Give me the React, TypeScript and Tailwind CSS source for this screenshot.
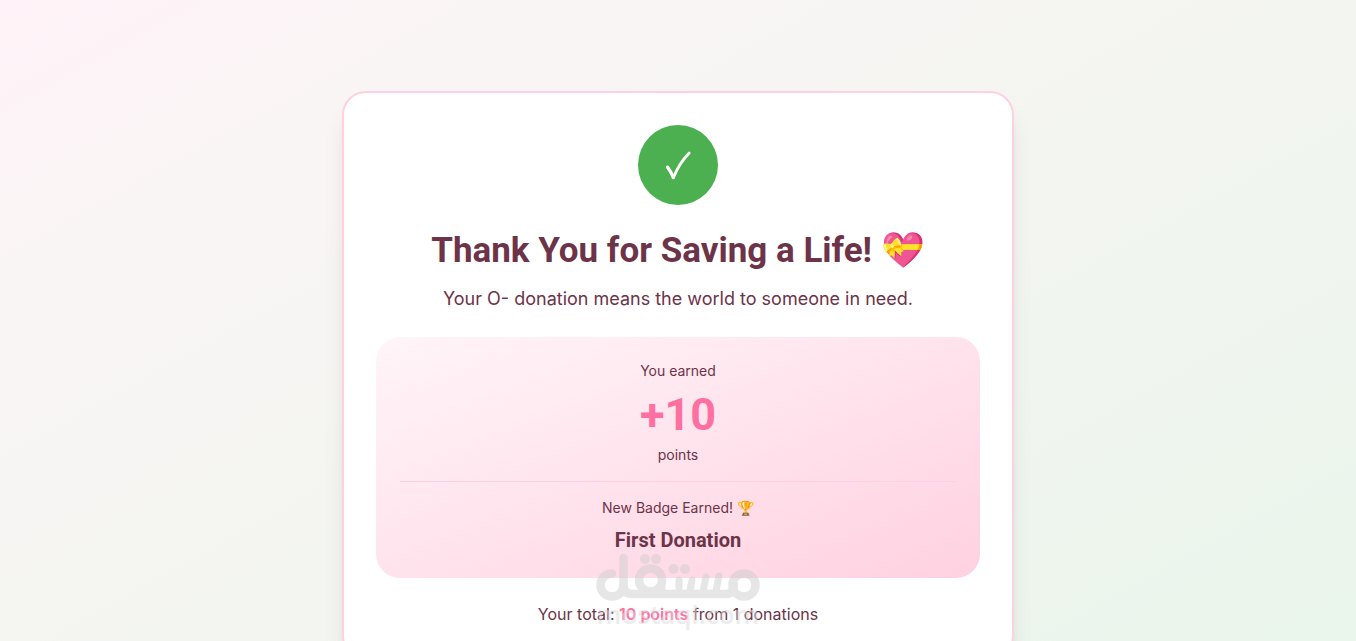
import React from "react";

function CheckBadge() {
  return (
    <div className="mx-auto mb-[26px] flex size-20 items-center justify-center rounded-full bg-[#4caf50]">
      <svg
        viewBox="0 0 80 80"
        className="size-20"
        fill="none"
        stroke="white"
        strokeLinecap="round"
        strokeLinejoin="round"
        role="img"
        aria-label="Success"
      >
        <path d="M29.6 42.2 Q33 46.500 35.200 52.500" strokeWidth="3.4" />
        <path d="M35.500 52.500 Q41 38.500 51.200 28" strokeWidth="2.800" />
      </svg>
    </div>
  );
}

function Watermark() {
  return (
    <div className="pointer-events-none absolute inset-x-0 -top-[50px] flex flex-col items-center opacity-50">
      <svg viewBox="0 0 166 50" className="h-[50px] w-[166px]" role="img" aria-label="مستقل">
        <g fill="none" stroke="#cfcfcf" strokeWidth="8.5" strokeLinecap="round" strokeLinejoin="round">
          <path d="M17 21.500A11.500 11.500 0 1 0 28.500 33V6" />
          <path d="M28.500 33.500Q29 42 37 42H131Q138 42 139 33" />
          <circle cx="55.500" cy="28" r="11.500" />
          <path d="M67 28V39M84 28V39M97 28L95 39M111 25L108 39M124 24L121 39" strokeWidth="7" />
          <circle cx="149" cy="33" r="11.500" />
        </g>
        <g fill="#cfcfcf">
          <circle cx="50" cy="7" r="5" />
          <circle cx="61" cy="7" r="5" />
          <circle cx="78.500" cy="17" r="5" />
          <circle cx="90" cy="17" r="5" />
        </g>
      </svg>
      <span className="font-['Open_Sans',sans-serif] text-[26px] font-semibold leading-6 text-[#dadada]">
        mostaql.com
      </span>
    </div>
  );
}

export default function App() {
  return (
    <main className="min-h-screen bg-linear-to-br/srgb from-[#fff2f8] via-[#faf5f5] via-18% to-[#e8f5ea] px-4 py-[91px] font-['Inter',sans-serif] text-[#6d3349]">
      <section className="mx-auto max-w-2xl rounded-3xl border-2 border-[#ffd1e0] bg-white p-8 text-center shadow-xl">
        <CheckBadge />
        <h1 className="mb-[14px] font-['Roboto',sans-serif] text-[35px] leading-10 font-bold">
          Thank You for Saving a Life! 💝
        </h1>
        <p className="mb-6 text-lg">Your O- donation means the world to someone in need.</p>
        <div className="mb-6 rounded-3xl bg-linear-to-br/srgb from-[#fff5f8] to-[#ffd1e0] p-6">
          <p className="text-sm">You earned</p>
          <p className="mt-[10px] mb-[6px] font-['Roboto',sans-serif] text-[45px] leading-12 font-bold text-[#ff6f9f]">
            +10
          </p>
          <p className="text-sm">points</p>
          <div className="mt-4 border-t border-[#ffd1e0] pt-4">
            <p className="mb-2 text-sm">New Badge Earned! 🏆</p>
            <p className="font-['Roboto',sans-serif] text-xl font-bold">First Donation</p>
          </div>
        </div>
        <div className="relative">
          <p>
            Your total: <span className="font-semibold text-[#ff6f9f]">10 points</span> from 1 donations
          </p>
          <Watermark />
        </div>
      </section>
    </main>
  );
}
